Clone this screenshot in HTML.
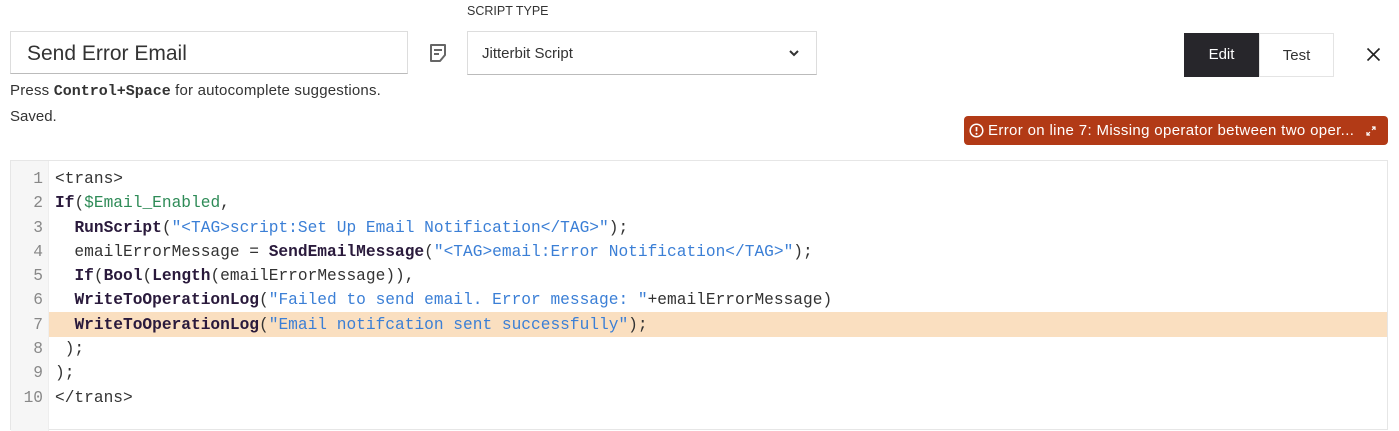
<!DOCTYPE html>
<html><head><meta charset="utf-8"><style>
body{margin:0;width:1399px;height:424px;background:#fff;font-family:"Liberation Sans",sans-serif;color:#222;position:relative;overflow:hidden}
.abs{position:absolute}
.name{left:10px;top:31px;width:398px;height:43px;border:1px solid #ddd;border-bottom:1px solid #bbb;box-sizing:border-box;font-size:21px;padding-left:16px;line-height:43px;color:#333}
.lbl{left:467px;top:4px;font-size:12.5px;color:#333}
.sel{left:467px;top:31px;width:350px;height:44px;border:1px solid #ddd;border-bottom:1px solid #bbb;box-sizing:border-box;font-size:15px;padding-left:14px;line-height:44px;color:#333}
.hint{left:10px;top:82px;font-size:15px;letter-spacing:0.2px;color:#333}
.hint b{font-family:"Liberation Mono",monospace;font-size:15px;letter-spacing:0}
.saved{left:10px;top:108px;font-size:15px;color:#333}
.edit{left:1184px;top:33px;width:75px;height:44px;background:#27262b;color:#fff;font-size:15px;text-align:center;line-height:44px}
.test{left:1259px;top:33px;width:75px;height:44px;border:1px solid #e4e4e4;box-sizing:border-box;font-size:15px;text-align:center;line-height:44px;color:#333}
.err{left:964px;top:116px;width:424px;height:29px;background:#b23a16;border-radius:4px;color:#fff;font-size:15px;letter-spacing:0.35px;line-height:29px}
.ed{left:10px;top:160px;width:1378px;height:270px;border:1px solid #e6e6e6;box-sizing:border-box}
.gut{left:11px;top:161px;width:37px;height:270px;background:#f6f6f6;border-right:1px solid #eee}
.code{left:0;top:167px;font-family:"Liberation Mono",monospace;font-size:16.2px;color:#333}
.ln{height:24.3px;line-height:24.3px;white-space:pre;position:relative}
.ln .n{position:absolute;left:11px;width:32px;text-align:right;color:#888}
.ln .t{position:absolute;left:55px}
.hl{background:#fadfc0;left:49px;top:312px;width:1338px;height:25px}
b.k{color:#2a1a3c}
.s{color:#3b7fd6}.v{color:#2e8b57}
</style></head><body>
<div class="abs lbl">SCRIPT TYPE</div>
<div class="abs name">Send Error Email</div>
<svg class="abs" style="left:429px;top:43px" width="18" height="20" viewBox="0 0 18 20"><path d="M2 2h14v10l-5 6H2z" fill="none" stroke="#666" stroke-width="2" stroke-linejoin="round"/><path d="M5 7h8M5 11h5" stroke="#666" stroke-width="2"/></svg>
<div class="abs sel">Jitterbit Script</div>
<svg class="abs" style="left:788px;top:48px" width="12" height="10" viewBox="0 0 12 10"><path d="M2 3l4 4 4-4" fill="none" stroke="#333" stroke-width="2"/></svg>
<div class="abs hint">Press <b>Control+Space</b> for autocomplete suggestions.</div>
<div class="abs saved">Saved.</div>
<div class="abs edit">Edit</div>
<div class="abs test">Test</div>
<svg class="abs" style="left:1366px;top:47px" width="15" height="15" viewBox="0 0 15 15"><path d="M1.5 1.5l12 12M13.5 1.5l-12 12" stroke="#222" stroke-width="1.6"/></svg>
<div class="abs err"><svg style="position:absolute;left:5px;top:7px" width="15" height="15" viewBox="0 0 15 15"><circle cx="7.5" cy="7.5" r="6.3" fill="none" stroke="#fff" stroke-width="1.5"/><path d="M7.5 4v4.3" stroke="#fff" stroke-width="1.7"/><circle cx="7.5" cy="10.8" r="1" fill="#fff"/></svg><span style="position:absolute;left:24px">Error on line 7: Missing operator between two oper...</span><svg style="position:absolute;left:402px;top:10px" width="10" height="10" viewBox="0 0 10 10"><path d="M6 1h3v3M9 1L6 4M4 9H1V6M1 9l3-3" fill="none" stroke="#fff" stroke-width="1.2"/></svg></div>
<div class="abs ed"></div>
<div class="abs gut"></div>
<div class="abs hl"></div>
<div class="abs code">
<div class="ln"><span class="n">1</span><span class="t">&lt;trans&gt;</span></div>
<div class="ln"><span class="n">2</span><span class="t"><b class="k">If</b>(<span class="v">$Email_Enabled</span>,</span></div>
<div class="ln"><span class="n">3</span><span class="t">  <b class="k">RunScript</b>(<span class="s">"&lt;TAG&gt;script:Set Up Email Notification&lt;/TAG&gt;"</span>);</span></div>
<div class="ln"><span class="n">4</span><span class="t">  emailErrorMessage = <b class="k">SendEmailMessage</b>(<span class="s">"&lt;TAG&gt;email:Error Notification&lt;/TAG&gt;"</span>);</span></div>
<div class="ln"><span class="n">5</span><span class="t">  <b class="k">If</b>(<b class="k">Bool</b>(<b class="k">Length</b>(emailErrorMessage)),</span></div>
<div class="ln"><span class="n">6</span><span class="t">  <b class="k">WriteToOperationLog</b>(<span class="s">"Failed to send email. Error message: "</span>+emailErrorMessage)</span></div>
<div class="ln"><span class="n">7</span><span class="t">  <b class="k">WriteToOperationLog</b>(<span class="s">"Email notifcation sent successfully"</span>);</span></div>
<div class="ln"><span class="n">8</span><span class="t"> );</span></div>
<div class="ln"><span class="n">9</span><span class="t">);</span></div>
<div class="ln"><span class="n">10</span><span class="t">&lt;/trans&gt;</span></div>
</div>
</body></html>
